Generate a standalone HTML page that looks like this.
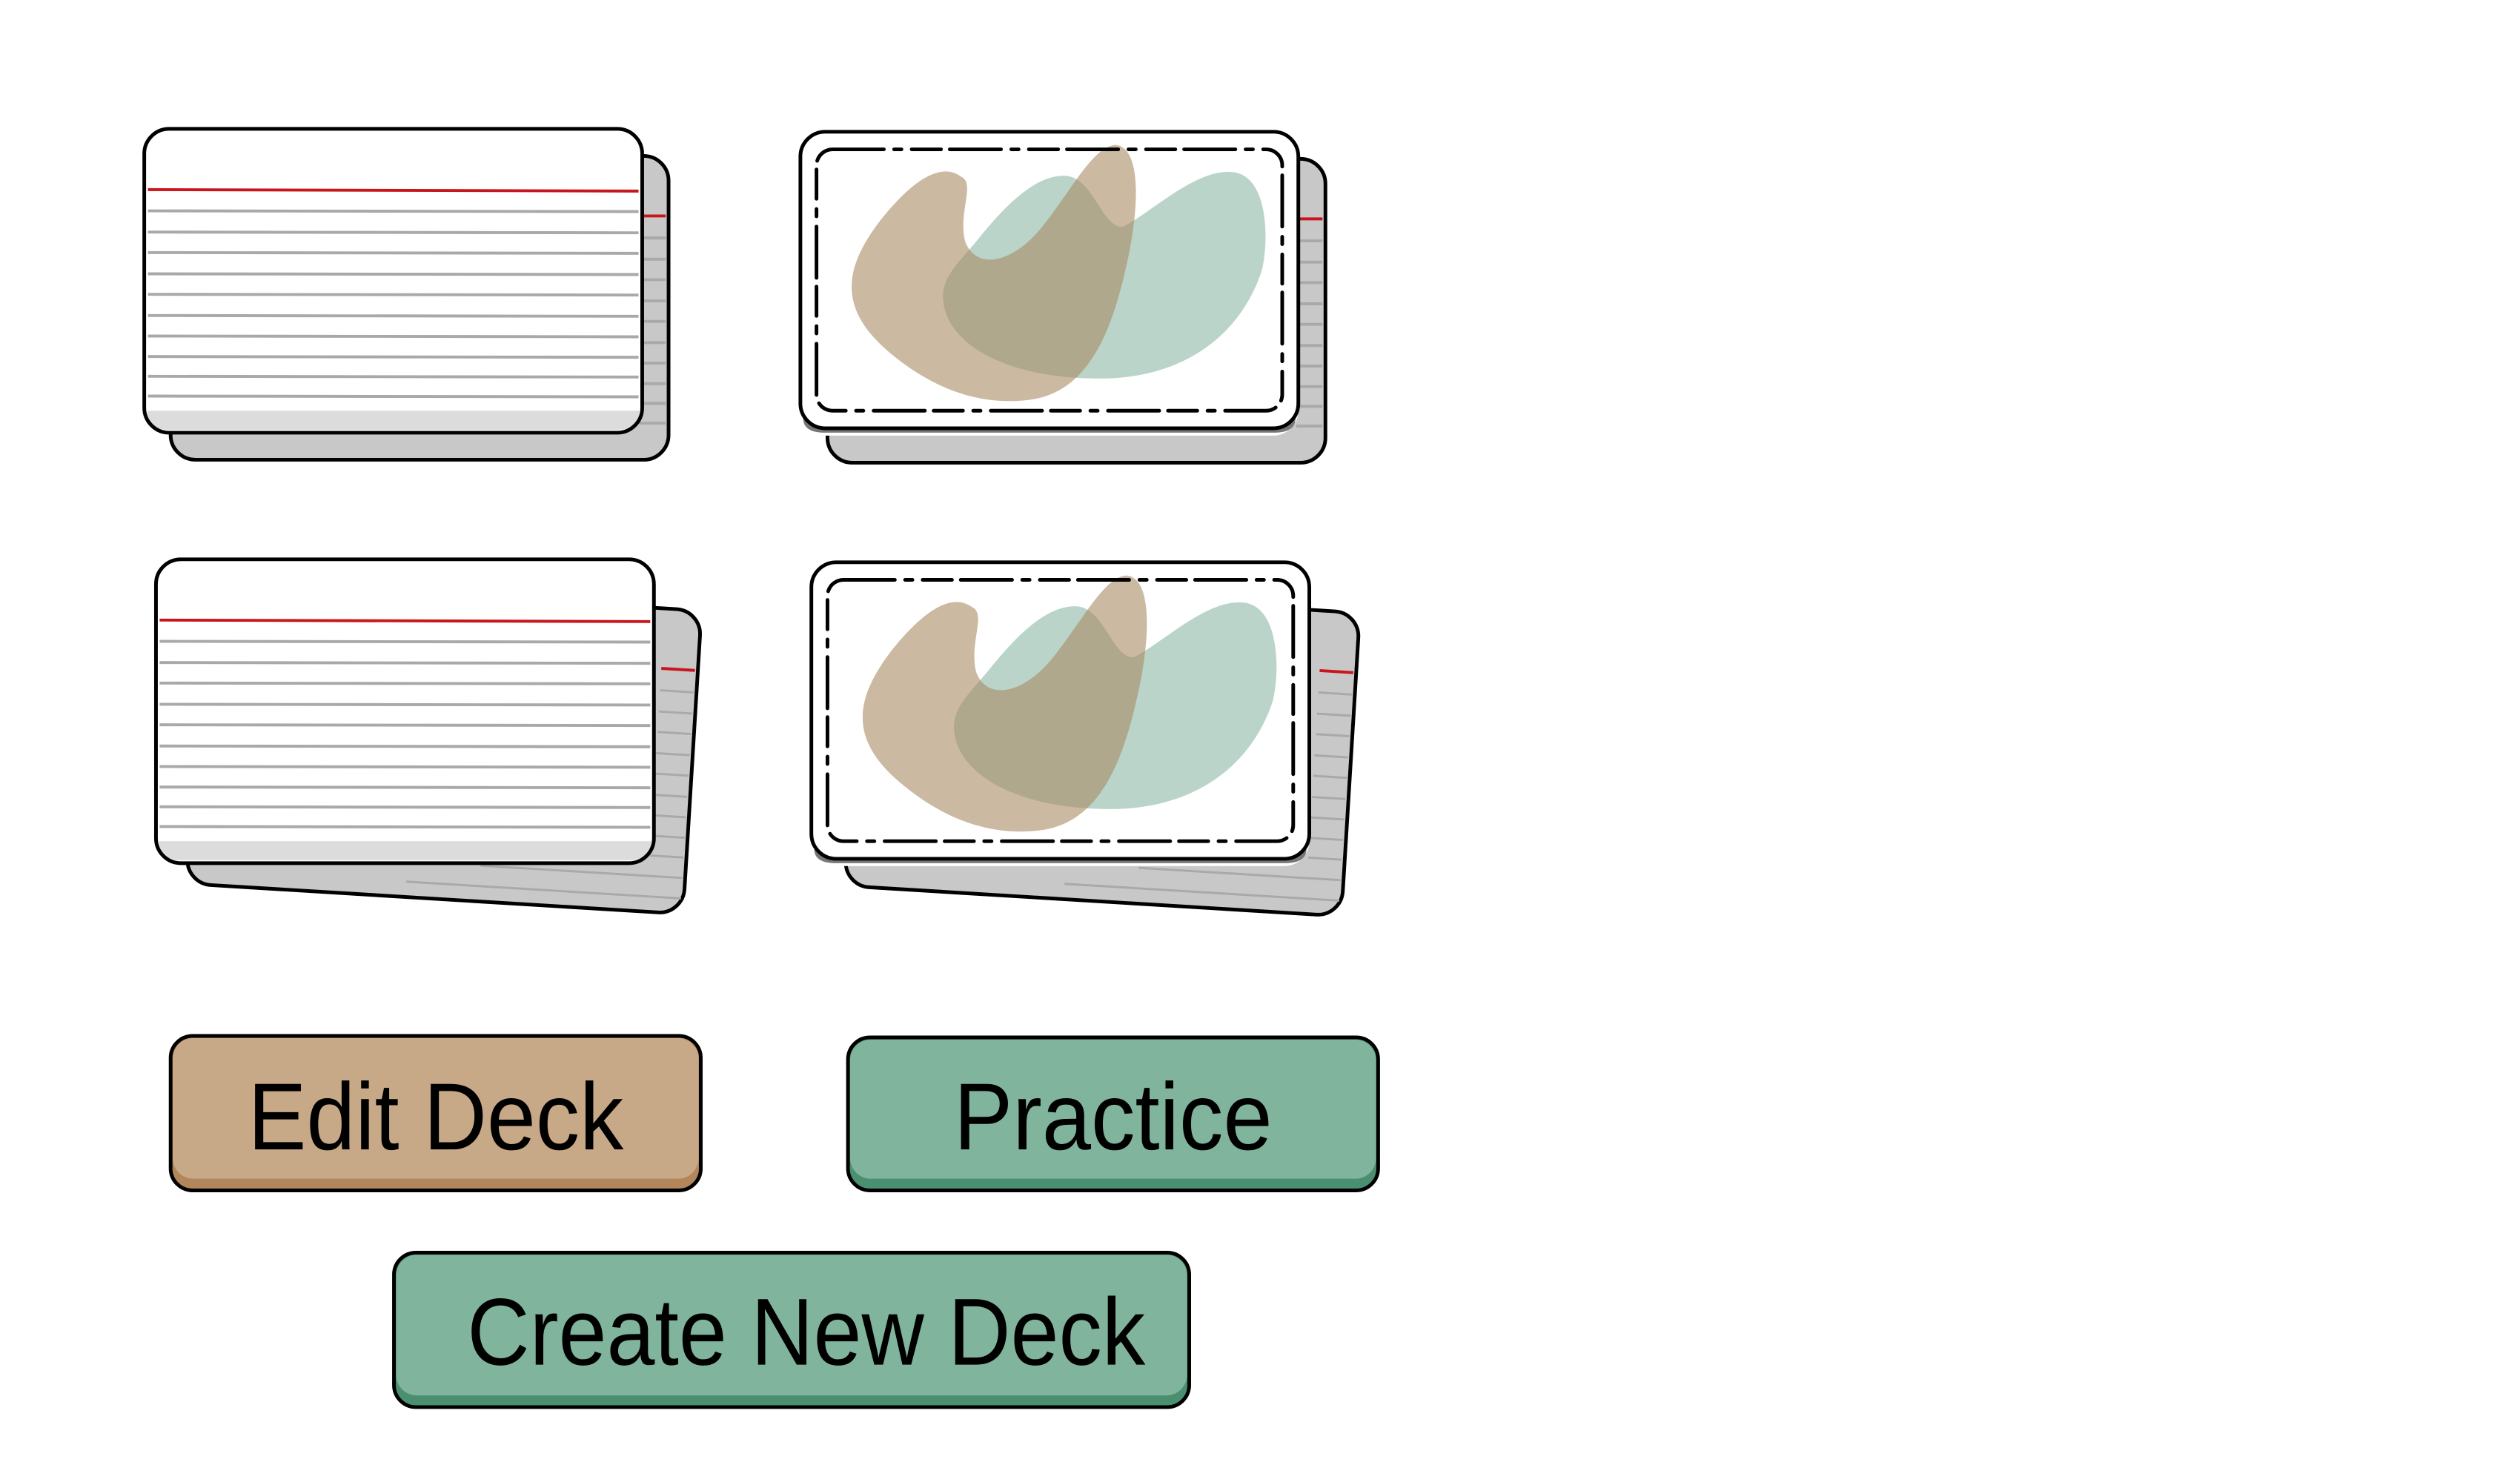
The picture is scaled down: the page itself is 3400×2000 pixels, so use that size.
<!DOCTYPE html>
<html><head><meta charset="utf-8"><style>
html,body{margin:0;padding:0;background:#fff;width:3400px;height:2000px;overflow:hidden}
</style></head><body>
<svg width="3400" height="2000" viewBox="0 0 3400 2000" xmlns="http://www.w3.org/2000/svg" font-family="Liberation Sans, sans-serif">
<defs>
  <g id="lined">
    <rect x="0" y="0" width="680" height="415" rx="34" fill="#fff"/>
    <path d="M4,385 L676,385 L676,390 Q676,411 646,411 L34,411 Q4,411 4,390 Z" fill="#dcdcdc"/>
    <line x1="5" y1="83" x2="675" y2="85" stroke="#c8161c" stroke-width="4"/>
    <g stroke="#a9a9a9" stroke-width="4">
      <line x1="5" y1="112" x2="675" y2="113"/><line x1="5" y1="141" x2="675" y2="142"/>
      <line x1="5" y1="169" x2="675" y2="170"/><line x1="5" y1="198" x2="675" y2="199"/>
      <line x1="5" y1="226" x2="675" y2="227"/><line x1="5" y1="255" x2="675" y2="256"/>
      <line x1="5" y1="283" x2="675" y2="284"/><line x1="5" y1="311" x2="675" y2="312"/>
      <line x1="5" y1="338" x2="675" y2="339"/><line x1="5" y1="365" x2="675" y2="366"/>
    </g>
    <rect x="0" y="0" width="680" height="415" rx="34" fill="none" stroke="#000" stroke-width="5"/>
  </g>
  <g id="back">
    <rect x="0" y="0" width="680" height="415" rx="34" fill="#c8c8c8" stroke="#000" stroke-width="5"/>
    <line x1="640" y1="82" x2="676" y2="82" stroke="#c8161c" stroke-width="4"/>
    <g stroke="#a9a9a9" stroke-width="4">
      <line x1="640" y1="112" x2="676" y2="112"/><line x1="640" y1="141" x2="676" y2="141"/>
      <line x1="640" y1="169" x2="676" y2="169"/><line x1="640" y1="198" x2="676" y2="198"/>
      <line x1="640" y1="226" x2="676" y2="226"/><line x1="640" y1="255" x2="676" y2="255"/>
      <line x1="640" y1="283" x2="676" y2="283"/><line x1="640" y1="311" x2="676" y2="311"/>
      <line x1="640" y1="338" x2="676" y2="338"/><line x1="640" y1="365" x2="676" y2="365"/>
    </g>
  </g>
  <g id="backtilt">
    <rect x="0" y="0" width="680" height="415" rx="34" fill="#c8c8c8" stroke="#000" stroke-width="5"/>
    <line x1="630" y1="82" x2="676" y2="82" stroke="#c8161c" stroke-width="4"/>
    <g stroke="#a9a9a9" stroke-width="3">
      <line x1="630" y1="112" x2="676" y2="112"/><line x1="630" y1="141" x2="676" y2="141"/>
      <line x1="630" y1="169" x2="676" y2="169"/><line x1="630" y1="198" x2="676" y2="198"/>
      <line x1="630" y1="226" x2="676" y2="226"/><line x1="630" y1="255" x2="676" y2="255"/>
      <line x1="630" y1="283" x2="676" y2="283"/><line x1="630" y1="311" x2="676" y2="311"/>
      <line x1="630" y1="338" x2="676" y2="338"/><line x1="400" y1="366" x2="676" y2="366"/>
      <line x1="300" y1="394" x2="676" y2="394"/>
    </g>
  </g>
  <g id="pic">
    <rect x="0" y="0" width="680" height="415" rx="34" fill="#fff"/>
    <path d="M4,392 L676,392 Q676,411 646,411 L34,411 Q4,411 4,392 Z" fill="#777"/>
    <rect x="0" y="0" width="680" height="405" rx="34" fill="#fff" stroke="#000" stroke-width="5"/>
    <path d="M240,150 C280,100 320,60 360,60 C400,60 410,130 440,130 C480,110 540,50 590,55 C640,60 640,150 630,190 C600,280 520,340 400,337 C280,335 200,290 195,230 C192,200 215,180 240,150 Z" fill="#8fb9a9" fill-opacity="0.62"/>
    <path d="M219,61 C190,40 150,70 110,120 C60,185 50,240 120,300 C190,360 260,375 320,365 C400,350 430,260 450,160 C465,80 460,20 430,18 C400,20 370,80 330,130 C290,180 240,190 225,150 C215,110 240,70 219,61 Z" fill="#a98a63" fill-opacity="0.6"/>
    <rect x="22" y="24" width="636" height="357" rx="22" fill="none" stroke="#000" stroke-width="5" stroke-dasharray="70 14 10 14 40 12" stroke-linecap="round"/>
  </g>
</defs>

<g transform="scale(0.988)">
<use href="#back" x="233" y="213"/>
<use href="#lined" x="197" y="176"/>
<use href="#back" x="1130" y="217"/>
<use href="#pic" x="1093" y="180"/>

<g transform="translate(606,1020) rotate(3.5) translate(-340,-207)"><use href="#backtilt"/></g>
<use href="#lined" x="213" y="764"/>
<g transform="translate(1505,1023) rotate(3.5) translate(-340,-207)"><use href="#backtilt"/></g>
<use href="#pic" x="1108" y="768"/>

<g>
  <rect x="233" y="1415" width="724" height="211" rx="30" fill="#b0865a" stroke="#000" stroke-width="5"/>
  <rect x="236" y="1418" width="718" height="192" rx="28" fill="#c8a987"/>
  <text x="595" y="1570" text-anchor="middle" font-size="130" textLength="513" lengthAdjust="spacingAndGlyphs" fill="#000">Edit Deck</text>
</g>
<g>
  <rect x="1158" y="1417" width="724" height="209" rx="30" fill="#4a9070" stroke="#000" stroke-width="5"/>
  <rect x="1161" y="1420" width="718" height="190" rx="28" fill="#80b49c"/>
  <text x="1520" y="1570" text-anchor="middle" font-size="130" textLength="435" lengthAdjust="spacingAndGlyphs" fill="#000">Practice</text>
</g>
<g>
  <rect x="538" y="1711" width="1086" height="211" rx="30" fill="#4a9070" stroke="#000" stroke-width="5"/>
  <rect x="541" y="1714" width="1080" height="192" rx="28" fill="#80b49c"/>
  <text x="1101" y="1864" text-anchor="middle" font-size="130" textLength="926" lengthAdjust="spacingAndGlyphs" fill="#000">Create New Deck</text>
</g>
</g>
</svg>
</body></html>
